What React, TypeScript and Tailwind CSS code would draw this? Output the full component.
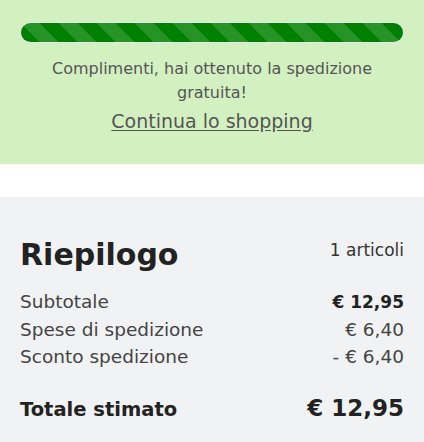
const font = { fontFamily: '"DejaVu Sans", "Noto Sans", sans-serif' };

const rows = [
  { label: "Subtotale", value: "€ 12,95", bold: true },
  { label: "Spese di spedizione", value: "€ 6,40" },
  { label: "Sconto spedizione", value: "- € 6,40" },
];

function ShippingProgress() {
  return (
    <section className="bg-[#d3f0c1] px-5 pt-[22px] pb-[29px] text-center">
      {/* Barra progresso */}
      <div className="h-[21px] w-full overflow-hidden rounded-full bg-[#e5e7eb] p-px">
        <div className="h-full w-full rounded-full bg-[#008000] bg-[linear-gradient(45deg,rgba(255,255,255,0.15)_25%,transparent_25%,transparent_50%,rgba(255,255,255,0.15)_50%,rgba(255,255,255,0.15)_75%,transparent_75%,transparent)] bg-[length:38px_38px]" />
      </div>
      <p className="mx-auto mt-[14px] text-[16px] leading-[24px] text-[#555]">
        Complimenti, hai ottenuto la spedizione gratuita!
      </p>
      <a
        href="#"
        className="mt-[4px] inline-block text-[19px] leading-[25px] text-[#555] underline underline-offset-2"
      >
        Continua lo shopping
      </a>
    </section>
  );
}

function Summary() {
  return (
    <section className="mt-[33px] bg-[#f1f2f4] px-5 pt-[40px] pb-6">
      <div className="flex items-start justify-between">
        <h2 className="text-[30px] leading-[36px] font-bold text-[#222]">Riepilogo</h2>
        <span className="mt-[3px] text-[17px] leading-[20px] text-[#333]">1 articoli</span>
      </div>
      <dl className="mt-[15px]">
        {rows.map((r) => (
          <div key={r.label} className="flex items-baseline justify-between text-[18.5px] leading-[27px]">
            <dt className="text-[#444]">{r.label}</dt>
            <dd className={r.bold ? "text-[17px] font-bold text-[#222]" : "text-[#444]"}>{r.value}</dd>
          </div>
        ))}
      </dl>
      <div className="mt-[22px] flex items-baseline justify-between">
        <span className="text-[19.5px] font-bold text-[#222]">Totale stimato</span>
        <span className="text-[23px] leading-[32px] font-bold text-[#222]">€ 12,95</span>
      </div>
    </section>
  );
}

export default function App() {
  return (
    <div className="min-h-screen bg-white" style={font}>
      <ShippingProgress />
      <Summary />
    </div>
  );
}
